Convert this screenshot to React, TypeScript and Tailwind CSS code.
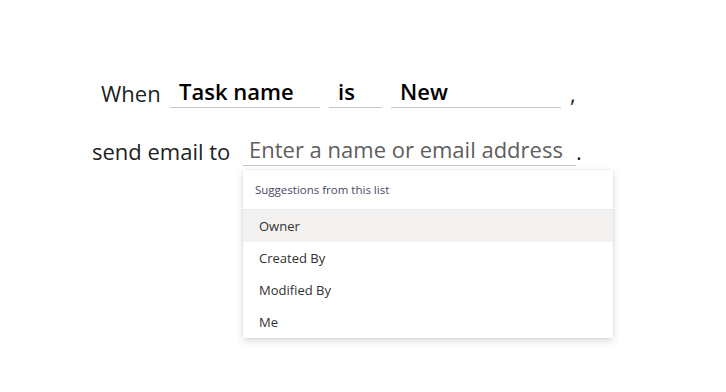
import React from "react";

const suggestions = ["Owner", "Created By", "Modified By", "Me"];

function Field({ value, width }: { value: string; width: string }) {
  return (
    <div className={`${width} border-b border-[#c8c6c4] pl-[9px] pb-[1px]`}>
      <span className="font-semibold text-black">{value}</span>
    </div>
  );
}

export default function App() {
  return (
    <div
      className="min-h-[392px] w-[726px] bg-white text-[22px] text-[#201f1e]"
      style={{ fontFamily: '"Open Sans", "Noto Sans", sans-serif' }}
    >
      <div className="pt-[76px]">
        <div className="flex items-end gap-[9px] pl-[101px] leading-[30px]">
          <span className="w-[60px]">When</span>
          <Field value="Task name" width="w-[150px]" />
          <Field value="is" width="w-[53px]" />
          <Field value="New" width="w-[170px]" />
          <span>,</span>
        </div>

        <div className="mt-[26px] flex items-end pl-[92px] leading-[30px]">
          <span className="mr-[8px] w-[143px]">send email to</span>
          <div className="relative w-[333px] border-b border-[#c8c6c4] pl-[6px] pb-[1px]">
            <span className="text-[#605e5c]">Enter a name or email address</span>
            <div className="absolute left-0 top-full z-10 mt-[5px] w-[370px] bg-white text-[#323130] shadow-[0_3px_8px_rgba(0,0,0,0.14),0_0_2px_rgba(0,0,0,0.1)]">
              <div className="h-[40px] border-b border-[#edebe9] pl-[12px] pt-[12px] text-[11.5px] leading-[16px] text-[#484865]">
                Suggestions from this list
              </div>
              {suggestions.map((s, i) => (
                <div
                  key={s}
                  className={`h-[32px] pl-[16px] text-[13px] leading-[32px] ${i === 0 ? "bg-[#f3f2f1]" : ""}`}
                >
                  {s}
                </div>
              ))}
            </div>
          </div>
          <span>.</span>
        </div>
      </div>
    </div>
  );
}
